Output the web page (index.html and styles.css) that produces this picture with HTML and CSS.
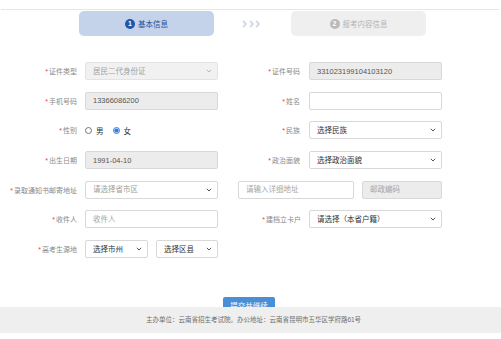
FILE: index.html
```html
<!DOCTYPE html>
<html lang="zh-CN">
<head>
    <meta charset="UTF-8">
    <meta name="viewport" content="width=device-width, initial-scale=1.0">
    <title>考生信息填写</title>
    <link rel="stylesheet" href="styles.css">
</head>
<body>
    <div class="steps">
        <div class="step active"><span class="num">1</span>基本信息</div>
        <div class="arrows">
            <svg width="20" height="8" viewBox="0 0 20 8">
                <path d="M2 1l3 3-3 3M9 1l3 3-3 3M15 1l3 3-3 3" fill="none" stroke="#d3d8e2" stroke-width="1.8"/>
            </svg>
        </div>
        <div class="step"><span class="num">2</span>报考内容信息</div>
    </div>

    <form class="form">
        <label class="lbl"><i>*</i>证件类型</label>
        <select class="field" disabled>
            <option>居民二代身份证</option>
        </select>
        <label class="lbl"><i>*</i>证件号码</label>
        <input class="field" type="text" value="331023199104103120" disabled>

        <label class="lbl"><i>*</i>手机号码</label>
        <input class="field" type="text" value="13366086200" disabled>
        <label class="lbl"><i>*</i>姓名</label>
        <input class="field" type="text">

        <label class="lbl"><i>*</i>性别</label>
        <div class="radios">
            <label><input type="radio" name="sex">男</label>
            <label><input type="radio" name="sex" checked>女</label>
        </div>
        <label class="lbl"><i>*</i>民族</label>
        <select class="field">
            <option>选择民族</option>
        </select>

        <label class="lbl"><i>*</i>出生日期</label>
        <input class="field" type="text" value="1991-04-10" disabled>
        <label class="lbl"><i>*</i>政治面貌</label>
        <select class="field">
            <option>选择政治面貌</option>
        </select>

        <label class="lbl"><i>*</i>录取通知书邮寄地址</label>
        <select class="field muted">
            <option>请选择省市区</option>
        </select>
        <div class="address">
            <input class="field" type="text" placeholder="请输入详细地址">
            <input class="field zip" type="text" placeholder="邮政编码" disabled>
        </div>

        <label class="lbl"><i>*</i>收件人</label>
        <input class="field" type="text" placeholder="收件人">
        <label class="lbl"><i>*</i>建档立卡户</label>
        <select class="field">
            <option>请选择（本省户籍）</option>
        </select>

        <label class="lbl"><i>*</i>高考生源地</label>
        <div class="pair">
            <select class="field"><option>选择市州</option></select>
            <select class="field"><option>选择区县</option></select>
        </div>
    </form>

    <div class="actions">
        <button type="button" class="submit">提交并继续</button>
    </div>

    <div class="footer">主办单位：云南省招生考试院。办公地址：云南省昆明市五华区学府路61号</div>
</body>
</html>
```

FILE: styles.css
```css
body {
    margin: 0;
    font-family: "Liberation Sans", "Noto Sans CJK SC", sans-serif;
    background: #fff;
    color: #333;
}
.steps {
    margin: 9px 2px 0 1px;
    border-top: 1px solid #e6e6e6;
    padding: 1px 0 0 78px;
    display: flex;
    align-items: center;
}
.step {
    width: 135px;
    height: 25px;
    border-radius: 5px;
    background: #efefef;
    color: #b4b4b4;
    font-size: 7.5px;
    display: flex;
    align-items: center;
    justify-content: center;
}
.step.active {
    background: #c5d3ea;
    color: #1f4f95;
}
.num {
    width: 10px;
    height: 10px;
    border-radius: 50%;
    background: #bababa;
    color: #fff;
    font-size: 7px;
    font-weight: bold;
    line-height: 10px;
    text-align: center;
    margin-right: 3px;
}
.step.active .num {
    background: #1c57ab;
}
.arrows {
    width: 77px;
    display: flex;
    justify-content: center;
    padding-right: 4px;
    box-sizing: border-box;
}
.arrows svg {
    display: block;
}
.form {
    margin-top: 26px;
    display: grid;
    grid-template-columns: 85px 133px 91px 133px;
    grid-auto-rows: 18px;
    row-gap: 11.7px;
    align-items: center;
}
.lbl {
    text-align: right;
    font-size: 7px;
    color: #8a8a8a;
    padding-right: 8px;
    white-space: nowrap;
}
.lbl:nth-child(4n+3) {
    padding-right: 9px;
}
.lbl i {
    font-style: normal;
    color: #e5443a;
    margin-right: 1px;
}
.field {
    box-sizing: border-box;
    height: 18px;
    width: 100%;
    margin: 0;
    padding: 0 7px;
    border: 1px solid #d8d8d8;
    border-radius: 2px;
    background-color: #fff;
    font-family: inherit;
    font-size: 7.5px;
    color: #333;
    outline: none;
}
.field:disabled {
    background-color: #ececec;
    color: #555;
}
.field::placeholder {
    color: #a6a6a6;
}
select.field {
    appearance: none;
    padding-right: 14px;
    background-image: url("data:image/svg+xml,%3Csvg xmlns='http://www.w3.org/2000/svg' width='6' height='4' viewBox='0 0 6 4'%3E%3Cpath d='M0.8 0.8L3 3l2.2-2.2' fill='none' stroke='%23555' stroke-width='1'/%3E%3C/svg%3E");
    background-repeat: no-repeat;
    background-position: right 5px center;
}
select.field:disabled {
    color: #777;
    background-image: url("data:image/svg+xml,%3Csvg xmlns='http://www.w3.org/2000/svg' width='6' height='4' viewBox='0 0 6 4'%3E%3Cpath d='M0.8 0.8L3 3l2.2-2.2' fill='none' stroke='%23999' stroke-width='1'/%3E%3C/svg%3E");
}
select.field.muted {
    color: #a0a0a0;
}
.radios {
    display: flex;
    align-items: center;
    gap: 9px;
    font-size: 7.5px;
    color: #333;
}
.radios label {
    display: flex;
    align-items: center;
    gap: 4px;
}
.radios input {
    width: 7px;
    height: 7px;
    margin: 0;
    accent-color: #2a7de1;
}
.address {
    grid-column: 3 / 5;
    display: flex;
    gap: 8px;
    padding-left: 20px;
}
.address .field {
    width: 116px;
}
.address .zip {
    width: 80px;
}
.pair {
    display: flex;
    gap: 8px;
}
.pair .field:first-child {
    width: 63px;
}
.pair .field:last-child {
    width: 62px;
}
.actions {
    margin-top: 37px;
    padding-left: 223px;
}
.submit {
    width: 52px;
    height: 18px;
    padding: 0;
    border: none;
    border-radius: 2px;
    background: #4a8fd6;
    color: #fff;
    font-family: inherit;
    font-size: 7.5px;
}
.footer {
    position: fixed;
    left: 0;
    right: 0;
    bottom: 6px;
    height: 26px;
    line-height: 26px;
    background: #efefef;
    color: #6e6e6e;
    font-size: 6.5px;
    text-align: center;
    padding-left: 6px;
}
```
